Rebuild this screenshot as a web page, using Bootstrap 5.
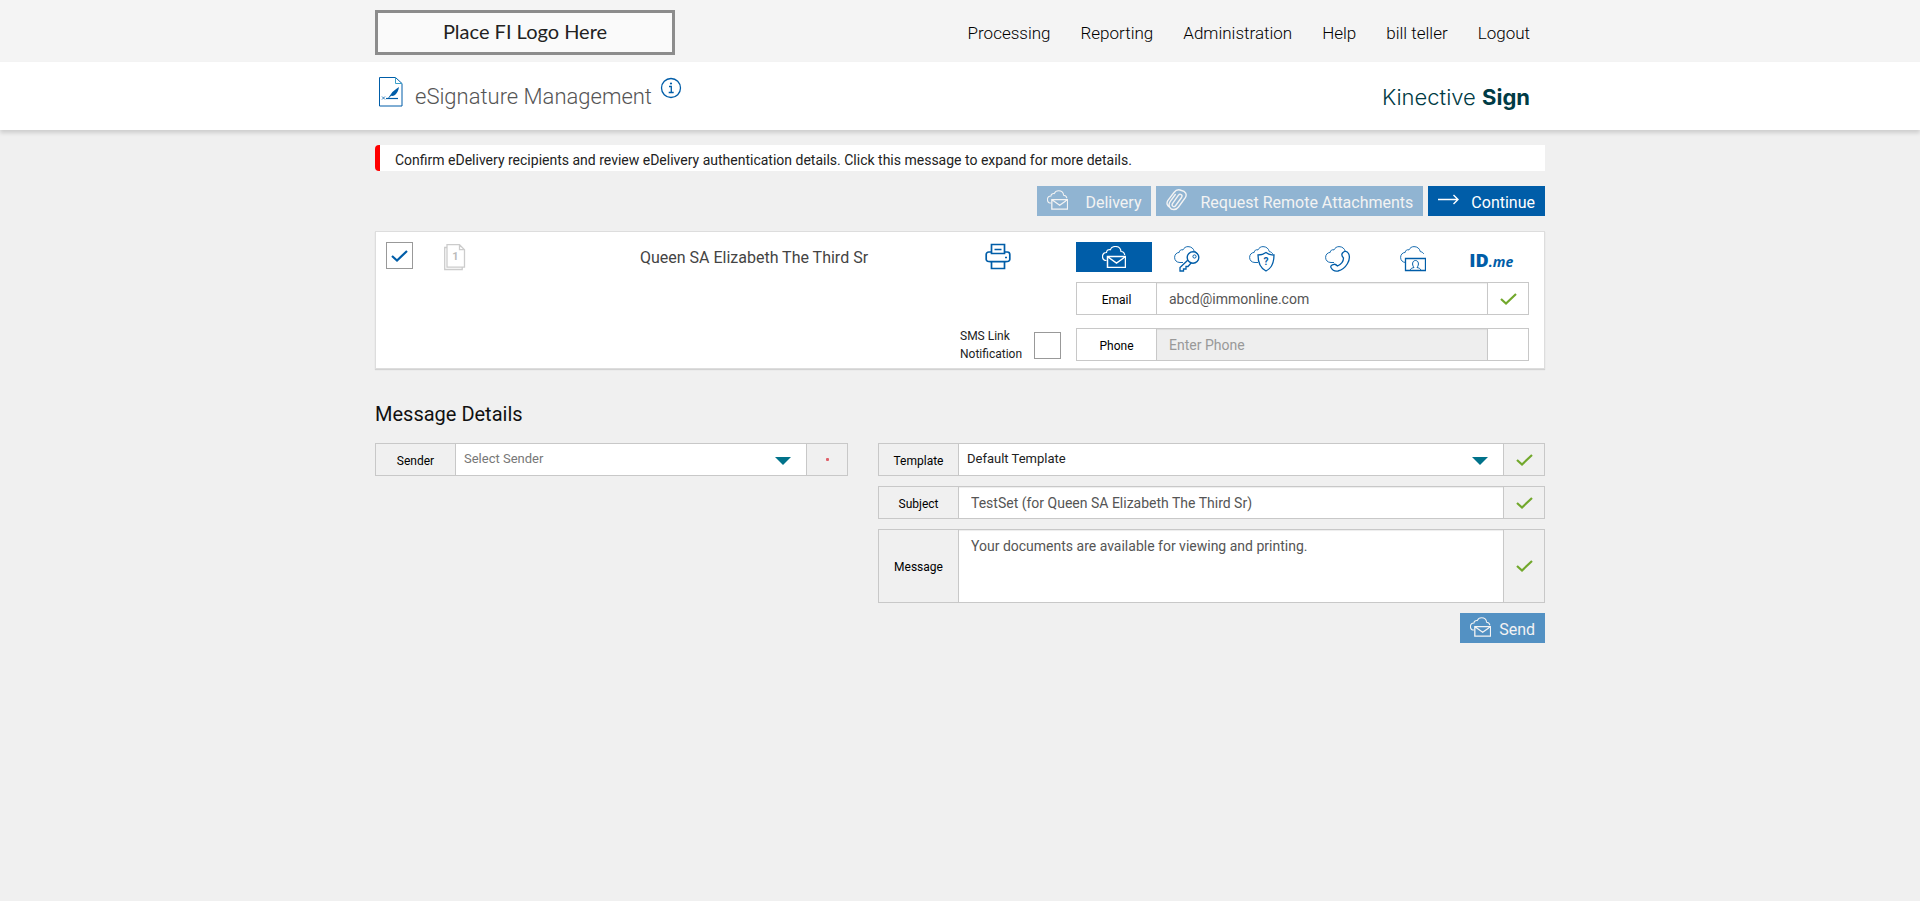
<!DOCTYPE html>
<html lang="en">
<head>
<meta charset="utf-8">
<meta name="viewport" content="width=device-width, initial-scale=1">
<title>eSignature Management</title>
<link href="https://cdn.jsdelivr.net/npm/bootstrap@5.3.0/dist/css/bootstrap.min.css" rel="stylesheet">
<style>
  :root { --brand: #005da8; --line: #c8c8c8; }
  body { font-family: Roboto, "Liberation Sans", sans-serif; font-size: 14px; line-height: 20px; background: #f0f0f0; color: #222; }
  .page-wrap { max-width: 1200px; padding-left: 15px; padding-right: 15px; }
  .topbar { background: #f4f4f4; }
  .topbar-row { min-height: 62px; padding: 10px 0 7px; }
  .fi-logo { width: 300px; height: 45px; border: 3px solid #8c8c8c; background: #fafafa; font: 400 20px/1 Lato, sans-serif; color: #222; padding-bottom: 3px; }
  .main-links { gap: 30px; padding-right: 15px; }
  .main-links .nav-link { padding: 0; color: #000; font-weight: 300; font-size: 17px; line-height: 24px; }
  .titlebar { background: #fff; box-shadow: 0 3px 4px rgba(0,0,0,.14); }
  .titlebar-row { min-height: 68px; }
  .page-title { font-size: 22px; line-height: 28px; font-weight: 300; color: #555; padding-top: 2px; }
  .product-name { font: 300 22px/28px Inter, sans-serif; color: #003b45; padding: 2px 15px 0 0; }
  .product-name b { font-weight: 700; }
  .notice { margin-top: 15px; height: 26px; border: 0; border-left: 5px solid #f00; border-radius: 4px 0 0 4px; background: #fff; color: #222; padding: 3px 15px 0; }
  .actions { gap: 5px; margin-top: 15px; }
  .tool-btn { --bs-btn-padding-x: 10px; --bs-btn-padding-y: 0px; --bs-btn-border-width: 0px; --bs-btn-border-radius: 0px; --bs-btn-font-size: 16px;
    --bs-btn-bg: var(--brand); --bs-btn-color: #fff; --bs-btn-disabled-bg: #90b4d2; --bs-btn-disabled-color: #f3f3f3; --bs-btn-disabled-opacity: 1; --bs-btn-hover-bg: #004f90; --bs-btn-hover-color: #fff;
    height: 30px; display: inline-flex; align-items: center; gap: 12px; line-height: 24px; }
  .tool-btn span { padding-top: 4px; }
  .tool-btn svg { margin-bottom: 2px; }
  .tool-btn.roomy { gap: 17px; }
  .send-btn { --bs-btn-disabled-bg: #5391c3; gap: 8px; }
  .recipient { margin-top: 15px; border: 1px solid #ddd; background: #fff; box-shadow: 0 1px 1px rgba(0,0,0,.12); padding: 10px 15px 7px 10px;
    display: grid; grid-template-columns: 162px minmax(0,412fr) 101px minmax(0,468fr); }
  .tick { appearance: none; width: 27px; height: 27px; border: 1px solid #999; background: #fff center/17px no-repeat; margin: 0; flex: none; }
  .tick:checked { background-image: url("data:image/svg+xml,%3Csvg xmlns='http://www.w3.org/2000/svg' viewBox='0 0 17 12'%3E%3Cpath d='M1 6l5 4.5L16 1' fill='none' stroke='%23005da8' stroke-width='2.2'/%3E%3C/svg%3E"); }
  .pages-icon { margin: 2px 0 0 31px; }
  .print-icon { margin: 1px 0 0 25px; }
  .sms-row { margin-bottom: -2px; }
  .recipient-name { font-size: 16px; line-height: 24px; color: #444; padding-top: 4px; }
  .sms-label { font-size: 12px; line-height: 18px; color: #222; }
  .contact { padding-left: 15px; }
  .methods .btn { --bs-btn-padding-x: 0; --bs-btn-padding-y: 0; --bs-btn-border-width: 0; --bs-btn-border-radius: 0; --bs-btn-color: var(--brand); --bs-btn-active-bg: var(--brand); --bs-btn-active-color: #fff; --bs-btn-hover-color: var(--brand); --bs-btn-hover-bg: #eef4fa;
    flex: 1 1 0; height: 30px; display: flex; align-items: center; justify-content: center; }
  .methods .aux svg { margin: 4px 5px 0 0; }
  .idme { font: 900 18px/18px "Open Sans", sans-serif; padding-top: 8px; }
  .idme i { font: italic 700 14px/18px "Open Sans", sans-serif; }
  .field { min-height: 33px; flex-wrap: nowrap; }
  .contact .field { margin-top: 10px; }
  .contact .field + .field { margin-top: 13px; }
  .field .input-group-text { border-radius: 0; border-color: var(--line); background: transparent; color: #000; font-size: 12px; line-height: 18px; padding: 2px 0 0; justify-content: center; width: 81px; }
  .field .input-group-text.state { width: 42px; padding: 0; }
  .field .form-control, .field .form-select { border-radius: 0; border-color: var(--line); color: #555; font-size: 14px; line-height: 20px; padding: 5px 12px; background-color: #fff; min-height: 33px; box-shadow: inset 0 1px 1px rgba(0,0,0,.075); }
  .field .form-control::placeholder { color: #999; opacity: 1; }
  .field .form-control:disabled { background-color: #eee; }
  .field .form-select { font-size: 13px; padding: 4px 34px 5px 8px; color: #222; box-shadow: none;
    background-image: url("data:image/svg+xml,%3Csvg xmlns='http://www.w3.org/2000/svg' viewBox='0 0 16 8'%3E%3Cpath d='M0 0h16L8 8z' fill='%2300728a'/%3E%3C/svg%3E"); background-size: 16px 8px; background-position: right 15px top 13px; }
  .field .form-select.unset { color: #777; }
  .field textarea.form-control { height: 74px; resize: none; padding-top: 6px; }
  .section-title { font-size: 20px; line-height: 24px; font-weight: 400; color: #111; margin: 33px 0 17px; }
  .details { display: grid; grid-template-columns: minmax(0,473fr) minmax(0,667fr); gap: 30px; align-items: start; }
  .field-stack { gap: 10px; }
  .required { width: 3px; height: 3px; border-radius: 1px; background: #e0606a; }
  @media (max-width: 991px) {
    .recipient, .details { grid-template-columns: minmax(0,1fr); gap: 15px; }
    .main-links { gap: 15px; }
    .contact { padding-left: 0; }
  }
</style>
</head>
<body>
<svg class="d-none" aria-hidden="true">
  <symbol id="cloud" viewBox="0 0 26 26"><path d="M9 16.500H6C2.500 16.500.600 14.200.600 11.400c0-2.900 2-4.800 4.600-5C5.300 4.400 7 3.300 9 3.900 10 1.800 11.800.600 14 .600c3.300 0 5.700 2 6.300 5 1.500.200 2.700 1 3.400 2.200" fill="none" stroke="currentColor" stroke-width=".9"/></symbol>
  <symbol id="mail" viewBox="0 0 24 22"><path d="M4.500 14.500C2 14.500.5 12.700.5 10.500c0-2.500 1.800-4 4-4C4.600 4.300 6.500 3.200 8.300 3.700 9.200 1.600 11 .5 13.200.5c3 0 5.500 2 5.800 5 2.200.1 3.400 1.600 3.700 3.500" fill="none" stroke="currentColor" stroke-width="1.200"/><path d="M5.500 10.500h18v11h-18zM6 11l8.500 6L23 11" fill="none" stroke="currentColor" stroke-width="1.500"/></symbol>
  <symbol id="ok" viewBox="0 0 17 12"><path d="M1 6l5 4.500L16 1" fill="none" stroke="#72a82c" stroke-width="2.200"/></symbol>
</svg>

<header>
  <div class="topbar">
    <div class="container-fluid page-wrap">
      <div class="topbar-row d-flex flex-wrap align-items-center justify-content-between">
        <div class="fi-logo d-flex align-items-center justify-content-center">Place FI Logo Here</div>
        <nav class="nav main-links" aria-label="Main">
          <a class="nav-link" href="#">Processing</a>
          <a class="nav-link" href="#">Reporting</a>
          <a class="nav-link" href="#">Administration</a>
          <a class="nav-link" href="#">Help</a>
          <a class="nav-link" href="#">bill teller</a>
          <a class="nav-link" href="#">Logout</a>
        </nav>
      </div>
    </div>
  </div>
  <div class="titlebar">
    <div class="container-fluid page-wrap">
      <div class="titlebar-row d-flex align-items-center justify-content-between">
        <div class="d-flex align-items-center">
          <svg class="ms-1 mb-2" width="24" height="30" viewBox="0 0 24 30" fill="none" stroke="#005da8"><path d="M.5.500h16l6.500 6v22.500H.5z"/><path d="M16.500.500v6H23" stroke="#3aa0c8"/><path d="M7 21.500h12" stroke-width="1.200"/><path d="M3 19.500l3 3M6 19.500l-3 3" stroke-width=".8"/><path d="M9.500 21c1-2 1.500-2.500 2.500-4 1.500-2.800 4.500-4.500 8-7-.5 3.500-2 6.500-4 8-1.500 1-3 1-4 .8z" fill="#005da8" stroke="none"/><path d="M9 21.500l6-6.500" stroke-width=".7"/></svg>
          <h1 class="page-title mb-0 ms-2 ps-1">eSignature Management</h1>
          <svg class="ms-2 mb-3" width="22" height="22" viewBox="0 0 22 22" fill="none" stroke="#005da8"><circle cx="11" cy="11" r="9.500" stroke-width="1.300"/><path d="M9 9.500h2.300v6M8.700 15.500h5" stroke-width="1.300"/><circle cx="11" cy="6.500" r="1.100" fill="#005da8" stroke="none"/></svg>
        </div>
        <div class="product-name">Kinective <b>Sign</b></div>
      </div>
    </div>
  </div>
</header>

<main class="container-fluid page-wrap">
  <button type="button" class="notice d-block w-100 text-start">Confirm eDelivery recipients and review eDelivery authentication details. Click this message to expand for more details.</button>

  <div class="d-flex flex-wrap justify-content-end actions">
    <button type="button" class="btn tool-btn roomy" disabled>
      <svg width="21" height="20"><use href="#mail"/></svg><span>Delivery</span>
    </button>
    <button type="button" class="btn tool-btn" disabled>
      <svg width="22" height="22" viewBox="0 0 22 22" fill="none" stroke="currentColor" stroke-width="1.400" stroke-linecap="round"><path d="M15.500 8.500l-6 8.200c-1.600 2-4.300.2-3-2l6-8.500c1.500-2 4.400-.3 3.200 1.800M3.800 18.300c-2.600-1.300-3.600-4-2-6.600L8 3.500C10 .8 13 .4 15.500 1.500c4 .5 5.800 4 3.800 7.200l-6.800 9.300c-2.200 3-6.800 3.700-8.700.3-1.300-2.300-.8-4.200.5-6l5-6.800"/></svg><span>Request Remote Attachments</span>
    </button>
    <button type="button" class="btn tool-btn">
      <svg width="21" height="16" viewBox="0 0 21 16" fill="none" stroke="currentColor" stroke-width="1.400"><path d="M0 7.500h20M15.500 3l4.500 4.500-4.500 4.500"/></svg><span>Continue</span>
    </button>
  </div>

  <section class="recipient" aria-label="Recipient">
    <div class="d-flex align-items-start">
      <input class="tick" type="checkbox" checked aria-label="Select recipient">
      <svg class="pages-icon" width="22" height="27" viewBox="0 0 22 27" fill="none" stroke="#ccc" stroke-width="1.300"><path d="M3 3.500H.700v22h17.500V23"/><path d="M3 .700h12.500l5 5v17.500H3zM15.500.700v5h5"/><text x="11.500" y="16" text-anchor="middle" font-size="11" font-weight="700" fill="#bbb" stroke="none">1</text></svg>
    </div>
    <div class="recipient-name text-center">Queen SA Elizabeth The Third Sr</div>
    <div class="d-flex flex-column justify-content-between">
      <svg class="print-icon" width="26" height="27" viewBox="0 0 26 27" fill="none" stroke="#005da8" stroke-width="1.700"><path d="M6.500 9V1.500h13V9M9.500 6.500h7M6 18.500H3.500A2.300 2.300 0 0 1 1.200 16V11.500A2.500 2.500 0 0 1 3.700 9H6.500v1.500h13V9h2.800a2.500 2.500 0 0 1 2.500 2.500V16a2.300 2.300 0 0 1-2.300 2.500H20M4.500 18.700h17M6.500 18.500v7h13v-7"/><path d="M20 14.500h2"/></svg>
      <div class="sms-row d-flex align-items-center justify-content-between">
        <label class="sms-label" for="sms">SMS Link<br>Notification</label>
        <input class="tick" type="checkbox" id="sms">
      </div>
    </div>
    <div class="contact">
      <div class="methods d-flex" role="group" aria-label="Delivery method">
        <button type="button" class="btn active" aria-label="Email delivery"><svg width="24" height="22"><use href="#mail"/></svg></button>
        <button type="button" class="btn aux" aria-label="Access key"><svg width="26" height="26" viewBox="0 0 26 26"><use href="#cloud"/><path d="M14.500 13.500L6 21.500V25h3.500v-2H12v-2.500h2l3.500-4" fill="#fff" stroke="currentColor" stroke-width="1.300"/><circle cx="19" cy="11.500" r="5.800" fill="#fff" stroke="currentColor" stroke-width="1.400"/><circle cx="20.500" cy="10.500" r="1.600" fill="none" stroke="currentColor"/></svg></button>
        <button type="button" class="btn aux" aria-label="Security question"><svg width="26" height="26" viewBox="0 0 26 26"><use href="#cloud"/><path d="M17 6.500c2.500 2 5 2.500 8 2.500 0 8-2 13-8 16-6-3-8-8-8-16 3 0 5.500-.5 8-2.500z" fill="#fff" stroke="currentColor" stroke-width="1.300"/><text x="17" y="19" text-anchor="middle" font-size="10" font-weight="700" fill="currentColor">?</text></svg></button>
        <button type="button" class="btn aux" aria-label="Phone call"><svg width="26" height="26" viewBox="0 0 26 26"><use href="#cloud"/><path d="M17.500 7c2-2.500 4.500-2 6 .5 3 6-2.500 15.500-10.500 17.500-3 .6-5.500-.5-7-3.500-.8-1.800 1-2.800 3-3.200 1.500-.2 2.500.6 3.500 1.700 4-2 6-5 6-8-1.500-1.500-2.500-3-1-5z" fill="#fff" stroke="currentColor" stroke-width="1.300"/></svg></button>
        <button type="button" class="btn aux" aria-label="Identity document"><svg width="26" height="26" viewBox="0 0 26 26"><use href="#cloud"/><path d="M5.500 12.500h20v12h-20z" fill="#fff" stroke="currentColor" stroke-width="1.300"/><path d="M10 24.500c.5-2 2-2.500 4-3-2.500-3-1.500-7 1.500-7s4 4 1.500 7c2 .5 3.500 1 4 3" fill="none" stroke="currentColor"/></svg></button>
        <button type="button" class="btn" aria-label="ID.me"><span class="idme">ID<i>.me</i></span></button>
      </div>
      <div class="input-group field">
        <label class="input-group-text" for="email">Email</label>
        <input class="form-control" type="email" id="email" value="abcd@immonline.com">
        <span class="input-group-text state"><svg width="17" height="12"><use href="#ok"/></svg></span>
      </div>
      <div class="input-group field">
        <label class="input-group-text" for="phone">Phone</label>
        <input class="form-control" type="tel" id="phone" placeholder="Enter Phone" disabled>
        <span class="input-group-text state"></span>
      </div>
    </div>
  </section>

  <h2 class="section-title">Message Details</h2>
  <form class="details">
    <div class="input-group field">
      <label class="input-group-text" for="sender">Sender</label>
      <select class="form-select unset" id="sender"><option>Select Sender</option></select>
      <span class="input-group-text state"><i class="required"></i></span>
    </div>
    <div class="field-stack d-grid">
      <div class="input-group field">
        <label class="input-group-text" for="template">Template</label>
        <select class="form-select" id="template"><option>Default Template</option></select>
        <span class="input-group-text state"><svg width="17" height="12"><use href="#ok"/></svg></span>
      </div>
      <div class="input-group field">
        <label class="input-group-text" for="subject">Subject</label>
        <input class="form-control" type="text" id="subject" value="TestSet (for Queen SA Elizabeth The Third Sr)">
        <span class="input-group-text state"><svg width="17" height="12"><use href="#ok"/></svg></span>
      </div>
      <div class="input-group field">
        <label class="input-group-text" for="message">Message</label>
        <textarea class="form-control" id="message">Your documents are available for viewing and printing.</textarea>
        <span class="input-group-text state"><svg width="17" height="12"><use href="#ok"/></svg></span>
      </div>
      <div class="text-end">
        <button type="submit" class="btn tool-btn send-btn" disabled>
          <svg width="21" height="20"><use href="#mail"/></svg><span>Send</span>
        </button>
      </div>
    </div>
  </form>
</main>
<script src="https://cdn.jsdelivr.net/npm/bootstrap@5.3.0/dist/js/bootstrap.bundle.min.js"></script>
</body>
</html>
